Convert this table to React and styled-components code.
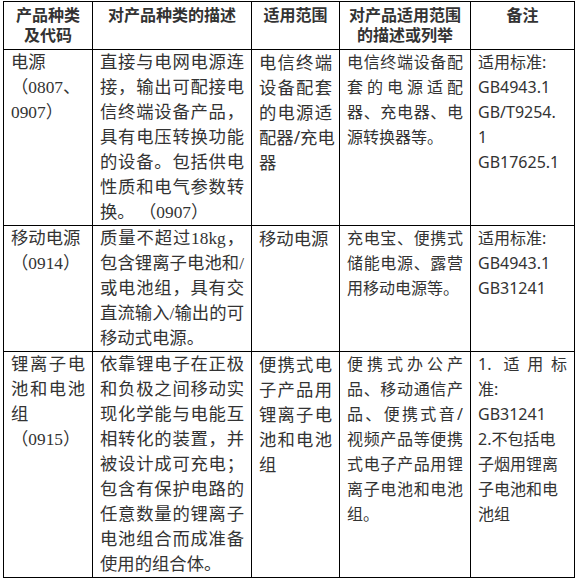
import React from 'react';
import styled, { createGlobalStyle } from 'styled-components';

const GlobalStyle = createGlobalStyle`
  html, body {
    margin: 0;
    padding: 0;
    background: #ffffff;
  }
`;

const Page = styled.div`
  padding: 1px 0 0 3px;
  color: #333333;
`;

const Table = styled.table`
  width: 571px;
  table-layout: fixed;
  border-collapse: collapse;
  border: 1px solid #000000;
`;

const Th = styled.th`
  border: 1px solid #000000;
  padding: 2px 7px 5px;
  vertical-align: top;
  text-align: center;
  font-family: "Noto Sans CJK SC", sans-serif;
  font-size: 16px;
  font-weight: 700;
  line-height: 20px;
  color: #333333;
`;

const HeadLine = styled.div`
  height: 20px;
  overflow: visible;
`;

const Td = styled.td`
  border: 1px solid #000000;
  padding: 0 7px;
  vertical-align: top;
  font-family: ${({ $serif }) =>
    $serif
      ? '"Liberation Serif", "Noto Sans CJK SC", serif'
      : '"Noto Sans", "Noto Sans CJK SC", sans-serif'};
  font-size: ${({ $small }) => ($small ? '16px' : '17.33px')};
  line-height: 25px;
`;

const Line = styled.span`
  display: block;
  white-space: pre;
  text-align: ${({ $justify }) => ($justify ? 'justify' : 'left')};
  text-align-last: ${({ $justify }) => ($justify ? 'justify' : 'auto')};
`;

const columns = [89, 159, 88, 131, 104];

const header = [
  ['产品种类', '及代码'],
  ['对产品种类的描述'],
  ['适用范围'],
  ['对产品适用范围', '的描述或列举'],
  ['备注'],
];

// cell = list of paragraphs, paragraph = list of lines (all but the last are justified)
const rows = [
  [
    [['电源'], ['（0807、'], ['0907）']],
    [[
      '直接与电网电源连',
      '接，输出可配接电',
      '信终端设备产品，',
      '具有电压转换功能',
      '的设备。包括供电',
      '性质和电气参数转',
      '换。 （0907）',
    ]],
    [['电信终端', '设备配套', '的电源适', '配器/充电', '器']],
    [['电信终端设备配', '套的电源适配', '器、充电器、电', '源转换器等。']],
    [['适用标准:'], ['GB4943.1'], ['GB/T9254.', '1'], ['GB17625.1']],
  ],
  [
    [['移动电源'], ['（0914）']],
    [[
      '质量不超过18kg，',
      '包含锂离子电池和/',
      '或电池组，具有交',
      '直流输入/输出的可',
      '移动式电源。',
    ]],
    [['移动电源']],
    [['充电宝、便携式', '储能电源、露营', '用移动电源等。']],
    [['适用标准:'], ['GB4943.1'], ['GB31241']],
  ],
  [
    [['锂离子电', '池和电池', '组'], ['（0915）']],
    [[
      '依靠锂电子在正极',
      '和负极之间移动实',
      '现化学能与电能互',
      '相转化的装置，并',
      '被设计成可充电；',
      '包含有保护电路的',
      '任意数量的锂离子',
      '电池组合而成准备',
      '使用的组合体。',
    ]],
    [['便携式电', '子产品用', '锂离子电', '池和电池', '组']],
    [[
      '便携式办公产',
      '品、移动通信产',
      '品、便携式音/',
      '视频产品等便携',
      '式电子产品用锂',
      '离子电池和电池',
      '组。',
    ]],
    [['1. 适用标', '准:'], ['GB31241'], ['2.不包括电'], ['子烟用锂离'], ['子电池和电'], ['池组']],
  ],
];

export default function App() {
  return (
    <Page>
      <GlobalStyle />
      <Table>
        <colgroup>
          {columns.map((w, i) => (
            <col key={i} style={{ width: w }} />
          ))}
        </colgroup>
        <thead>
          <tr>
            {header.map((lines, i) => (
              <Th key={i}>
                {lines.map((l, k) => (
                  <HeadLine key={k}>{l}</HeadLine>
                ))}
              </Th>
            ))}
          </tr>
        </thead>
        <tbody>
          {rows.map((row, r) => (
            <tr key={r}>
              {row.map((cell, c) => (
                <Td key={c} $serif={c < 2} $small={c > 2}>
                  {cell.map((para, p) =>
                    para.map((line, l) => (
                      <Line key={`${p}-${l}`} $justify={l < para.length - 1}>
                        {line}
                      </Line>
                    ))
                  )}
                </Td>
              ))}
            </tr>
          ))}
        </tbody>
      </Table>
    </Page>
  );
}
